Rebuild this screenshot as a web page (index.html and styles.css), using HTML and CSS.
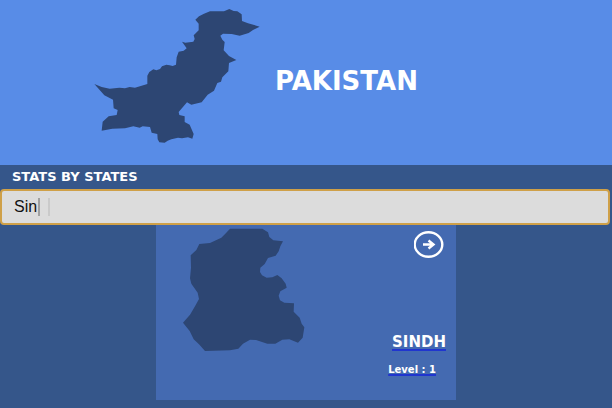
FILE: index.html
```html
<!DOCTYPE html>
<html lang="en">
<head>
<meta charset="utf-8">
<meta name="viewport" content="width=device-width, initial-scale=1">
<title>Pakistan</title>
<link rel="stylesheet" href="styles.css">
</head>
<body>
<header class="hero">
  <svg class="hero-map" viewBox="0 0 540 450" aria-hidden="true">
    <path d="M28 252 L50 261 L74 266 L103 263 L120 265 L134 261 L150 263 L187 252 L187 227 L193 216 L205 208 L214 211 L225 207 L231 199 L244 194 L254 196 L263 198 L273 194 L275 172 L281 155 L296 152 L305 145 L291 125 L301 128 L325 125 L329 117 L326 106 L341 91 L341 71 L331 59 L342 49 L357 41 L375 34 L417 34 L433 27 L446 33 L457 34 L470 43 L471 63 L489 70 L524 80 L504 90 L491 99 L464 107 L440 102 L414 101 L406 107 L412 119 L419 126 L416 151 L432 168 L454 180 L432 189 L430 214 L412 232 L408 245 L397 249 L387 272 L368 284 L350 307 L319 314 L306 307 L281 336 L283 345 L299 349 L299 366 L314 374 L326 402 L322 416 L309 412 L291 415 L279 413 L259 418 L248 422 L239 428 L223 427 L218 418 L217 402 L200 398 L195 381 L173 379 L164 383 L145 379 L120 385 L82 386 L50 392 L53 365 L71 349 L95 345 L98 330 L86 325 L84 299 L58 286 Z"/>
  </svg>
  <h1 class="hero-title">PAKISTAN</h1>
</header>
<main>
  <label class="section-title" for="search">STATS BY STATES</label>
  <div class="search">
    <input class="search-input" id="search" type="text" value="Sin">
    <span class="caret"></span>
    <span class="pointer"></span>
  </div>
  <article class="card">
    <svg class="card-map" viewBox="18 30 450 390" aria-hidden="true">
      <path d="M240 41 L337 41 L354 52 L358 66 L370 76 L399 79 L391 94 L386 109 L377 122 L354 129 L344 147 L331 158 L330 171 L336 181 L350 188 L367 187 L382 180 L395 190 L407 206 L410 218 L391 229 L386 242 L390 256 L403 263 L432 265 L431 290 L449 308 L455 326 L463 337 L458 368 L444 383 L418 373 L397 374 L376 386 L352 386 L318 375 L300 374 L279 386 L265 401 L240 406 L165 408 L147 388 L131 373 L119 348 L99 323 L120 299 L135 274 L147 252 L143 233 L124 206 L120 190 L123 158 L122 121 L139 105 L148 87 L180 84 L214 68 L226 56 Z"/>
    </svg>
    <div class="card-info">
      <button class="card-go" type="button" aria-label="Open Sindh">
        <svg viewBox="0 0 30 28" aria-hidden="true">
          <ellipse cx="14.5" cy="13.5" rx="13.8" ry="12.3"/>
          <path d="M9 13.5h10M14.5 9.5l5 4-5 4"/>
        </svg>
      </button>
      <div class="card-text">
        <a class="card-name" href="#sindh">SINDH</a>
        <a class="card-level" href="#sindh">Level : 1</a>
      </div>
    </div>
  </article>
</main>
</body>
</html>
```
FILE: styles.css
```css
* {
  box-sizing: border-box;
}

body {
  margin: 0;
  min-height: 100vh;
  background: #35568a;
  color: #fff;
  font-family: "DejaVu Sans", Verdana, sans-serif;
}

.hero {
  display: flex;
  align-items: center;
  gap: 10px;
  padding: 0 85px 15px;
  background: #588ce7;
}

.hero-map {
  width: 180px;
  height: 150px;
  fill: #2d4673;
}

.hero-title {
  margin: 12px 0 0;
  font-size: 26px;
  line-height: 36px;
  font-weight: 700;
}

.section-title {
  display: block;
  padding: 0 12px;
  font-size: 13px;
  line-height: 24px;
  font-weight: 700;
}

.search {
  position: relative;
  margin-right: 2px;
}

.search-input {
  display: block;
  width: 100%;
  height: 36px;
  padding: 0 12px;
  border: 2px solid #cfa048;
  border-radius: 4px;
  outline: none;
  background: #dcdcdc;
  color: #111;
  font-family: "Liberation Sans", Arial, sans-serif;
  font-size: 16px;
}

.caret,
.pointer {
  position: absolute;
  top: 9px;
  left: 38px;
  width: 2px;
  height: 18px;
  background: #a0a0a0;
}

.pointer {
  left: 48px;
  background: #cacaca;
}

.card {
  display: flex;
  justify-content: space-between;
  width: 300px;
  max-width: 100%;
  min-height: 175px;
  margin: 0 auto;
  background: #446ab1;
}

.card-map {
  width: 150px;
  height: 130px;
  fill: #2d4673;
}

.card-info {
  display: flex;
  flex-direction: column;
  justify-content: space-between;
  align-items: flex-end;
  padding: 6px 10px 20px;
}

.card-go {
  width: 30px;
  height: 28px;
  margin-right: 2px;
  padding: 0;
  border: 0;
  background: none;
}

.card-go svg {
  display: block;
  fill: none;
  stroke: #fff;
  stroke-width: 2.4;
}

.card-text {
  display: flex;
  flex-direction: column;
  align-items: flex-end;
  gap: 8px;
}

.card-name,
.card-level {
  color: #fff;
  font-weight: 700;
  line-height: 20px;
  text-decoration: underline 2px #2035cf;
  text-decoration-skip-ink: none;
}

.card-name {
  font-size: 15px;
  text-underline-offset: 2px;
}

.card-level {
  margin-right: 10px;
  font-size: 10px;
}
```
